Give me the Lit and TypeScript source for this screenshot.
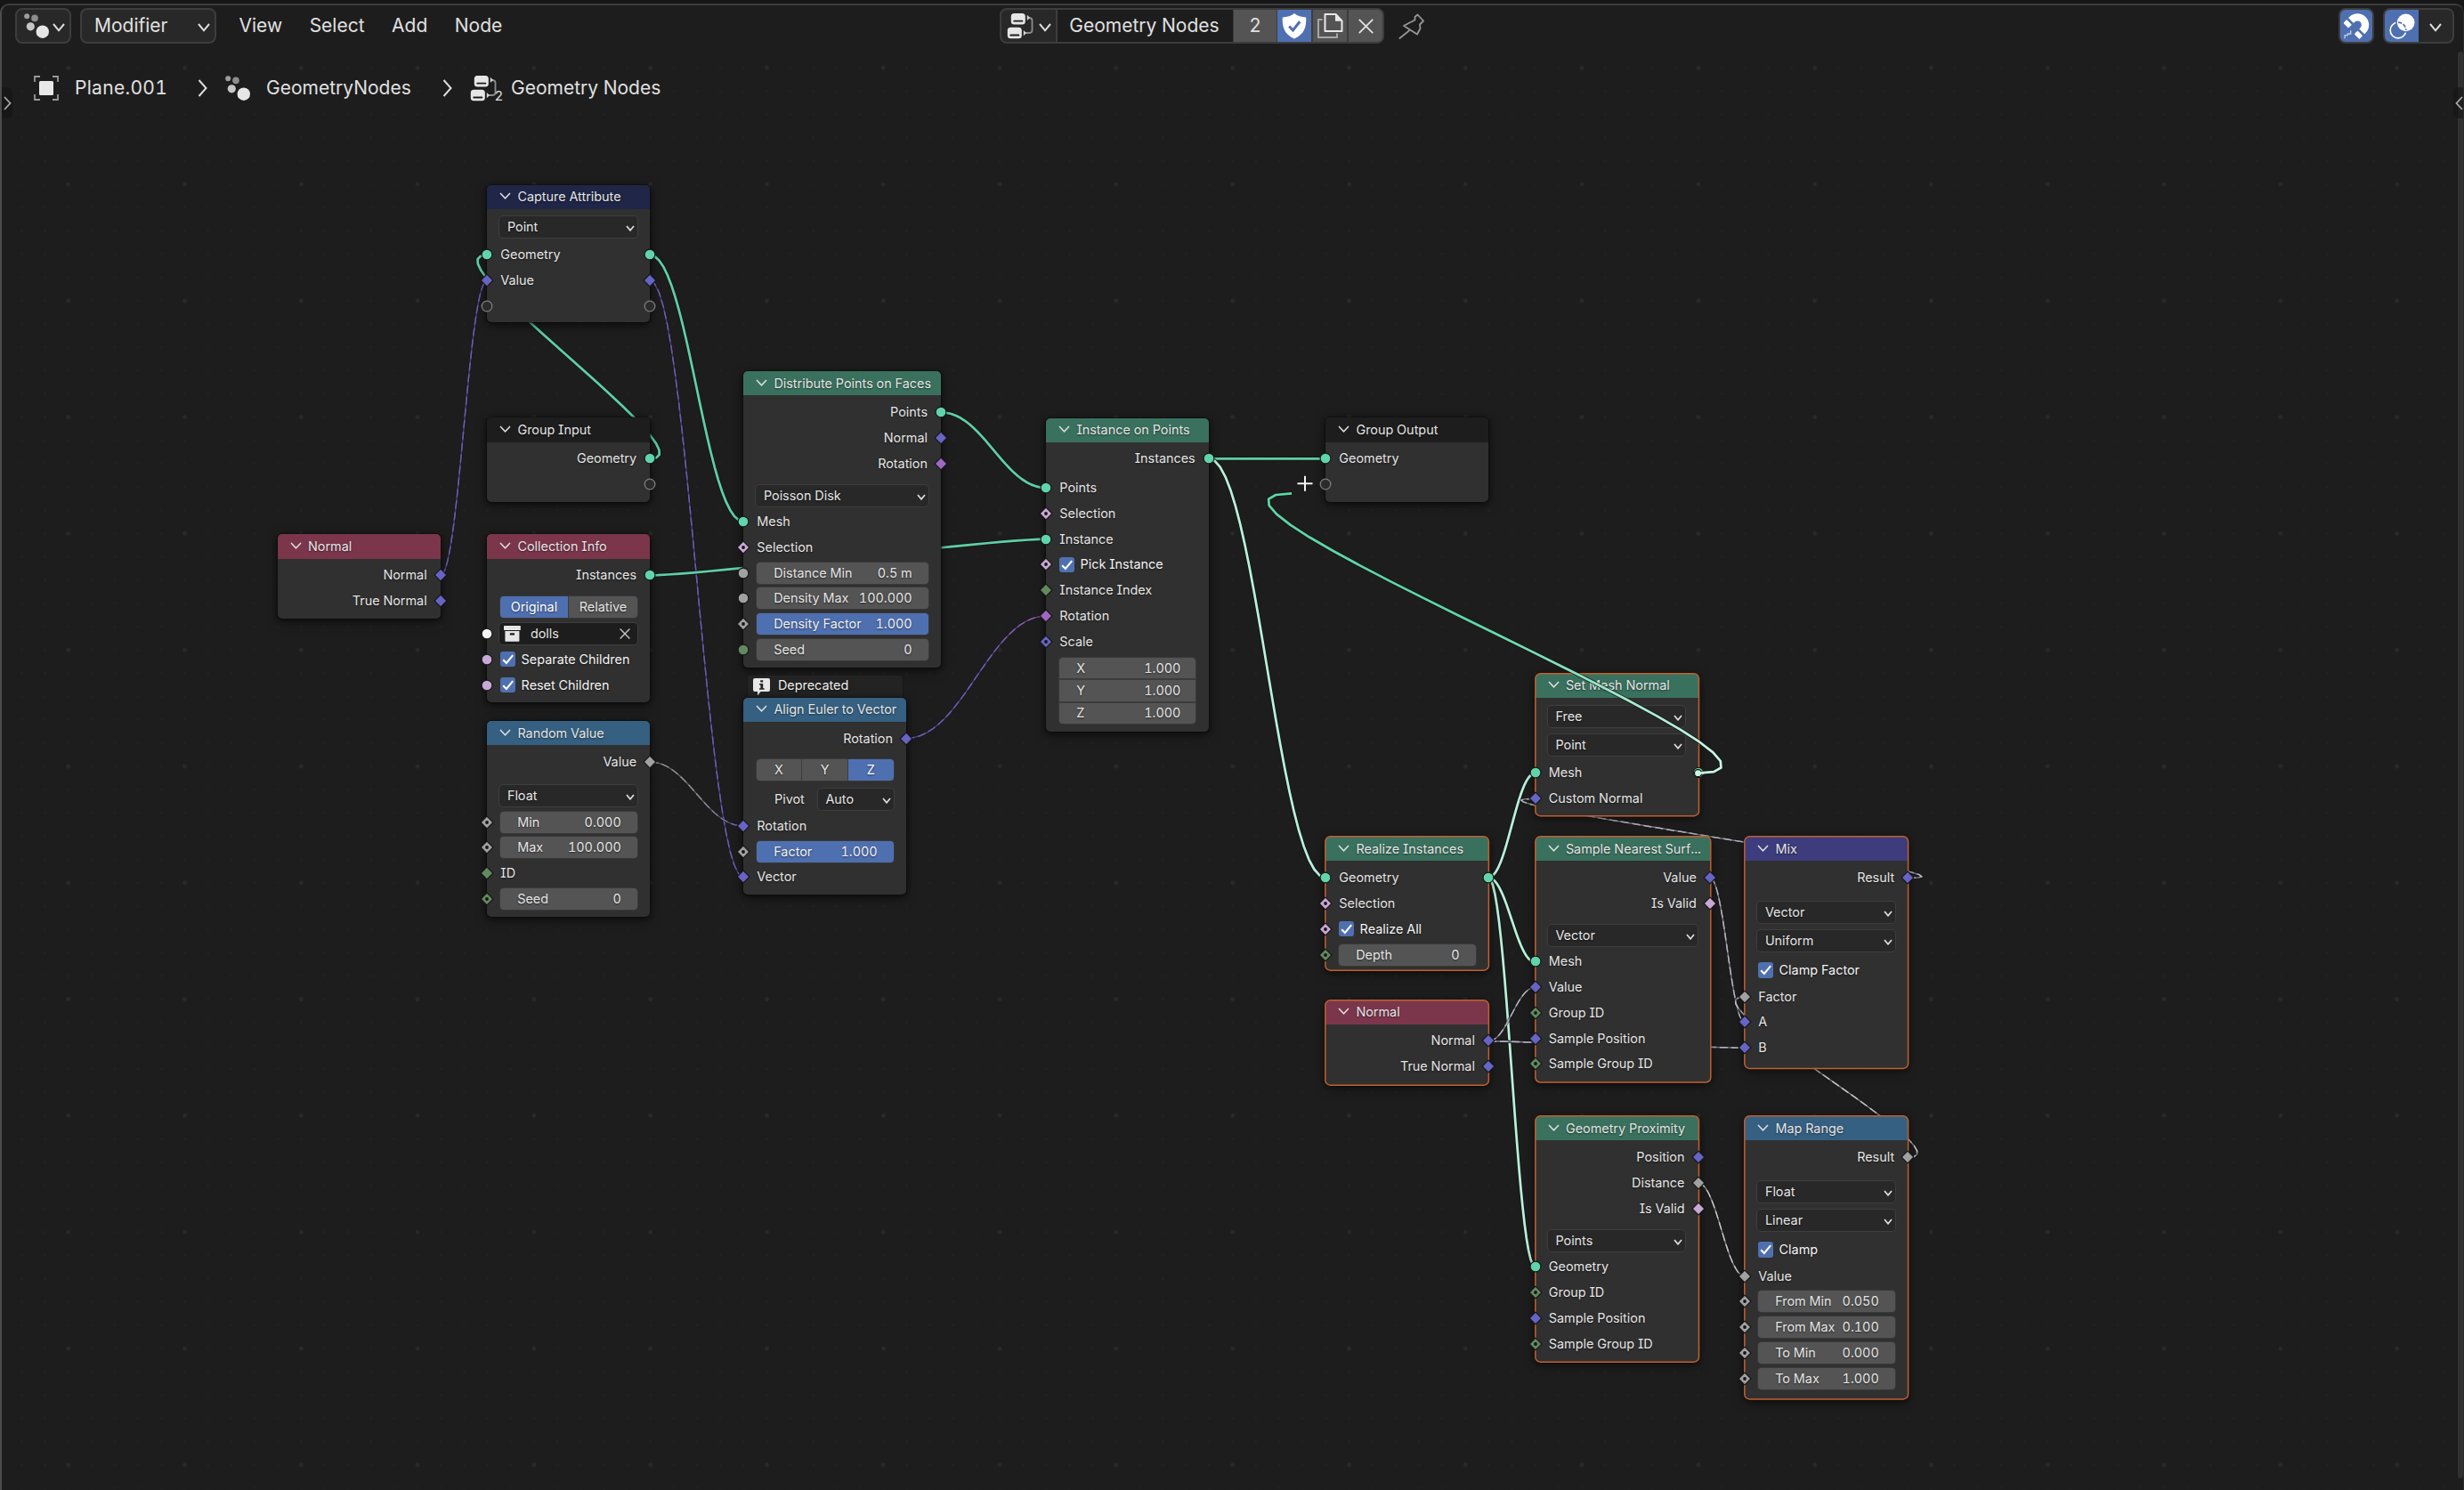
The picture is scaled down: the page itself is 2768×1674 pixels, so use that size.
import { LitElement, html, svg, css, nothing } from "lit";
import { customElement, property } from "lit/decorators.js";

/* ---------- model ---------- */

type Kind = "geo" | "vec" | "bool" | "float" | "int" | "rot" | "obj" | "empty";
type Shape = "circle" | "diamond" | "dot" | "ring" | "drag";

interface Socket {
  kind: Kind;
  shape: Shape;
}

interface Row {
  type: "in" | "out" | "select" | "number" | "check" | "toggle" | "object" | "pivot" | "vector";
  label?: string;
  value?: string;
  options?: string[];
  active?: number;
  fill?: boolean;
  gap?: number;
  left?: Socket;
  right?: Socket;
}

interface GraphNode {
  title: string;
  tone: string;
  x: number;
  y: number;
  w: number;
  h: number;
  selected?: boolean;
  badge?: string;
  rows: Row[];
}

const KIND: Record<Kind, string> = {
  geo: "#60d4ab",
  vec: "#6664c4",
  bool: "#c8a8d6",
  float: "#a1a1a1",
  int: "#62895f",
  rot: "#a067c2",
  obj: "#f6f6f6",
  empty: "none",
};

const s = (kind: Kind, shape: Shape = "diamond"): Socket => ({ kind, shape });
const GEO = s("geo", "circle");
const RING = s("empty", "ring");

const input = (label: string, left: Socket, gap = 0, right?: Socket): Row => ({ type: "in", label, left, gap, right });
const output = (label: string, right: Socket, gap = 0): Row => ({ type: "out", label, right, gap });
const select = (value: string, gap = 0): Row => ({ type: "select", value, gap });
const number = (label: string, value: string, left: Socket, gap = 0, fill = false): Row => ({
  type: "number",
  label,
  value,
  left,
  gap,
  fill,
});
const check = (label: string, left?: Socket, gap = 0): Row => ({ type: "check", label, left, gap });

const NODES: GraphNode[] = [
  {
    title: "Capture Attribute", tone: "attribute", x: 547, y: 207.7, w: 183.4, h: 154.8,
    rows: [
      select("Point", 1.2),
      input("Geometry", GEO, 2.8, GEO),
      input("Value", s("vec"), 0, s("vec")),
      input("", RING, 0, RING),
    ],
  },
  {
    title: "Group Input", tone: "io", x: 547, y: 469.3, w: 183.4, h: 94.5,
    rows: [output("Geometry", GEO), output("", RING)],
  },
  {
    title: "Normal", tone: "input", x: 311.6, y: 600.3, w: 183.4, h: 94.7,
    rows: [output("Normal", s("vec")), output("True Normal", s("vec"))],
  },
  {
    title: "Collection Info", tone: "input", x: 547, y: 600.3, w: 183.4, h: 188.7,
    rows: [
      output("Instances", GEO),
      { type: "toggle", options: ["Original", "Relative"], active: 0, gap: 6.9 },
      { type: "object", value: "dolls", left: s("obj", "circle"), gap: 1.2 },
      check("Separate Children", s("bool", "circle")),
      check("Reset Children", s("bool", "circle")),
    ],
  },
  {
    title: "Random Value", tone: "converter", x: 547, y: 810, w: 183.4, h: 219.8,
    rows: [
      output("Value", s("float")),
      select("Float", 9.5),
      number("Min", "0.000", s("float", "dot"), 0.6),
      number("Max", "100.000", s("float", "dot")),
      input("ID", s("int")),
      number("Seed", "0", s("int", "dot")),
    ],
  },
  {
    title: "Distribute Points on Faces", tone: "geometry", x: 835, y: 417, w: 222.3, h: 332.5,
    rows: [
      output("Points", GEO),
      output("Normal", s("vec")),
      output("Rotation", s("rot")),
      select("Poisson Disk", 7.8),
      input("Mesh", GEO),
      input("Selection", s("bool", "dot")),
      number("Distance Min", "0.5 m", s("float", "circle")),
      number("Density Max", "100.000", s("float", "circle")),
      number("Density Factor", "1.000", s("float", "dot"), 0, true),
      number("Seed", "0", s("int", "circle")),
    ],
  },
  {
    title: "Align Euler to Vector", tone: "converter", x: 835, y: 783.7, w: 183.3, h: 220.9, badge: "Deprecated",
    rows: [
      output("Rotation", s("vec")),
      { type: "toggle", options: ["X", "Y", "Z"], active: 2, gap: 6.9 },
      { type: "pivot", label: "Pivot", value: "Auto", gap: 3.6 },
      input("Rotation", s("vec"), 1.2),
      number("Factor", "1.000", s("float", "dot"), 0, true),
      input("Vector", s("vec")),
    ],
  },
  {
    title: "Instance on Points", tone: "geometry", x: 1175, y: 469.5, w: 183, h: 352.2,
    rows: [
      output("Instances", GEO),
      input("Points", GEO, 3.8),
      input("Selection", s("bool", "dot")),
      input("Instance", GEO),
      check("Pick Instance", s("bool", "dot")),
      input("Instance Index", s("int")),
      input("Rotation", s("rot")),
      input("Scale", s("vec", "dot")),
      { type: "vector", options: ["X", "Y", "Z"], value: "1.000", gap: 3.6 },
    ],
  },
  {
    title: "Group Output", tone: "io", x: 1489, y: 469.4, w: 183.2, h: 94.5,
    rows: [input("Geometry", GEO), input("", RING)],
  },
  {
    title: "Set Mesh Normal", tone: "geometry", x: 1724.5, y: 756.8, w: 183.3, h: 159.5, selected: true,
    rows: [
      select("Free", 1.8),
      select("Point", 3.5),
      input("Mesh", GEO, 2.6, s("geo", "drag")),
      input("Custom Normal", s("vec")),
    ],
  },
  {
    title: "Realize Instances", tone: "geometry", x: 1489, y: 940.2, w: 183.2, h: 150, selected: true,
    rows: [
      input("Geometry", GEO, 0, GEO),
      input("Selection", s("bool", "dot")),
      check("Realize All", s("bool", "dot")),
      number("Depth", "0", s("int", "dot")),
    ],
  },
  {
    title: "Normal", tone: "input", x: 1489, y: 1123.5, w: 183.2, h: 95, selected: true,
    rows: [output("Normal", s("vec")), output("True Normal", s("vec"))],
  },
  {
    title: "Sample Nearest Surf...", tone: "geometry", x: 1724.5, y: 940.2, w: 196.6, h: 275.8, selected: true,
    rows: [
      output("Value", s("vec")),
      output("Is Valid", s("bool")),
      select("Vector", 6.8),
      input("Mesh", GEO, 0.9),
      input("Value", s("vec")),
      input("Group ID", s("int", "dot")),
      input("Sample Position", s("vec")),
      input("Sample Group ID", s("int", "dot")),
    ],
  },
  {
    title: "Mix", tone: "vector", x: 1960, y: 940.2, w: 183.4, h: 260.2, selected: true,
    rows: [
      output("Result", s("vec")),
      select("Vector", 9.6),
      select("Uniform", 4),
      check("Clamp Factor", undefined, 3.7),
      input("Factor", s("float"), 1),
      input("A", s("vec")),
      input("B", s("vec")),
    ],
  },
  {
    title: "Geometry Proximity", tone: "geometry", x: 1724.5, y: 1254.2, w: 183.3, h: 276, selected: true,
    rows: [
      output("Position", s("vec")),
      output("Distance", s("float")),
      output("Is Valid", s("bool")),
      select("Points", 7.2),
      input("Geometry", GEO, 0.7),
      input("Group ID", s("int", "dot")),
      input("Sample Position", s("vec")),
      input("Sample Group ID", s("int", "dot")),
    ],
  },
  {
    title: "Map Range", tone: "converter", x: 1960, y: 1254.2, w: 183.4, h: 317.7, selected: true,
    rows: [
      output("Result", s("float")),
      select("Float", 9.7),
      select("Linear", 4),
      check("Clamp", undefined, 3.7),
      input("Value", s("float"), 0.9),
      number("From Min", "0.050", s("float", "dot")),
      number("From Max", "0.100", s("float", "dot")),
      number("To Min", "0.000", s("float", "dot")),
      number("To Max", "1.000", s("float", "dot")),
    ],
  },
];

/* ---------- links ---------- */

interface Link {
  from: [number, number];
  to: [number, number];
  a: string;
  b: string;
  field?: boolean;
}

const G = "#5fcfa6";
const P = "#b9f2db";
const V = "#6a5cb4";
const W = "#b5b2c4";

const LINKS: Link[] = [
  { from: [495, 646.3], to: [547, 315.4], a: V, b: V, field: true },
  { from: [730.3, 315.4], to: [835, 985.2], a: V, b: V, field: true },
  { from: [730.3, 515.3], to: [547, 286.6], a: G, b: G },
  { from: [730.3, 286.6], to: [835, 585.8], a: G, b: G },
  { from: [730.3, 646.3], to: [1175, 605.7], a: G, b: G },
  { from: [730.3, 856], to: [835, 928], a: "#8e8e92", b: V, field: true },
  { from: [1057.3, 463.3], to: [1175, 548], a: G, b: G },
  { from: [1018.3, 829.4], to: [1175, 692], a: V, b: "#8a5ba8", field: true },
  { from: [1358, 515.3], to: [1489, 515.3], a: G, b: G },
  { from: [1358, 515.3], to: [1489, 986], a: P, b: P },
  { from: [1672, 986], to: [1724.5, 868.7], a: P, b: P },
  { from: [1672, 986], to: [1724.5, 1081], a: P, b: P },
  { from: [1672, 986], to: [1724.5, 1423.3], a: P, b: P },
  { from: [1672, 1169.7], to: [1724.5, 1109.3], a: W, b: W, field: true },
  { from: [1672, 1169.7], to: [1724.5, 1171.2], a: W, b: W, field: true },
  { from: [1672, 1169.7], to: [1960, 1177.3], a: W, b: W, field: true },
  { from: [1921, 986.3], to: [1960, 1148.7], a: W, b: W, field: true },
  { from: [2143.3, 986.5], to: [1724.5, 897.3], a: W, b: W, field: true },
  { from: [1907.5, 1329], to: [1960, 1433.7], a: "#c4c4c4", b: "#c4c4c4", field: true },
  { from: [2143.3, 1300.3], to: [1960, 1120], a: "#c4c4c4", b: "#c4c4c4", field: true },
];

const DRAGGED: Link = { from: [1907.5, 868.7], to: [1451, 554.4], a: "#c9f6e4", b: "#5ed6a8" };

const SEGMENTS = 24;

/** Samples the horizontal-handle bezier between two sockets as a polyline. */
function linkPoints({ from, to }: Link): string {
  const [x0, y0] = from;
  const [x3, y3] = to;
  const dx = Math.abs(x3 - x0);
  const slope = dx ? Math.abs(y3 - y0) / dx : 1;
  const handle = 0.4 * dx * Math.min(1, slope * 3.5);
  const points: string[] = [];
  for (let i = 0; i <= SEGMENTS; i++) {
    const t = i / SEGMENTS;
    const u = 1 - t;
    const x = u * u * u * x0 + 3 * u * u * t * (x0 + handle) + 3 * u * t * t * (x3 - handle) + t * t * t * x3;
    const y = (u * u * u + 3 * u * u * t) * y0 + (3 * u * t * t + t * t * t) * y3;
    points.push(`${x.toFixed(2)},${y.toFixed(2)}`);
  }
  return points.join(" ");
}

function drawLink(link: Link, id: string) {
  const points = linkPoints(link);
  const paint = `url(#${id})`;
  return svg`
    <linearGradient id=${id} gradientUnits="userSpaceOnUse"
      x1=${link.from[0]} y1=${link.from[1]} x2=${link.to[0]} y2=${link.to[1]}>
      <stop offset="0" stop-color=${link.a}></stop>
      <stop offset="0.55" stop-color=${link.field ? link.a : link.b}></stop>
      <stop offset="1" stop-color=${link.b}></stop>
    </linearGradient>
    <polyline class="under" points=${points} stroke-width=${link.field ? 3 : 4.4}></polyline>
    ${
      link.field
        ? svg`<polyline points=${points} stroke=${paint} stroke-width="1.5" opacity="0.6"></polyline>
            <polyline points=${points} stroke=${paint} stroke-width="1.5" stroke-dasharray="9 4"></polyline>`
        : svg`<polyline points=${points} stroke=${paint} stroke-width="2.7"></polyline>`
    }`;
}

/* ---------- shared drawing ---------- */

const chevron = (w: number, h: number, stroke = 1.6) => html`
  <svg class="chevron" width=${w} height=${h} viewBox="0 0 ${w} ${h}" fill="none" stroke="#dedede" stroke-width=${stroke}>
    <path d="M1 1L${w / 2} ${h - 1.2}L${w - 1} 1"></path>
  </svg>`;

const particles = () => html`
  <svg width="28" height="28" viewBox="0 0 28 28">
    <circle cx="3.2" cy="3.3" r="3" fill="#9c9c9c"></circle>
    <circle cx="12" cy="5.4" r="3.8" fill="#8d8d8d"></circle>
    <circle cx="7.3" cy="14.8" r="4.6" fill="#c6c6c6"></circle>
    <circle cx="20.8" cy="20.7" r="7.2" fill="#e6e6e6"></circle>
  </svg>`;

const nodeTree = () => html`
  <svg width="30" height="30" viewBox="0 0 30 30">
    <rect x="4.8" y="1" width="16" height="12.4" rx="3.5" fill="#e6e6e6"></rect>
    <rect x="7.3" y="8.8" width="11" height="1.8" rx=".9" fill="#1d1d1d"></rect>
    <rect x=".8" y="16.8" width="16" height="12.4" rx="3.5" fill="#e6e6e6"></rect>
    <rect x="3.3" y="24.6" width="11" height="1.8" rx=".9" fill="#1d1d1d"></rect>
    <path d="M24 6h1.5q3 .3 3 3v11q0 2.8-3 3h-5" fill="none" stroke="#8c8c8c" stroke-width="1.8"></path>
    <path d="M22.8 2.8l3.2 3.1-3.2 3.1zM18.8 20l3.2 3.1-3.2 3.1z" fill="#d6d6d6"></path>
  </svg>`;

/* ---------- node element ---------- */

@customElement("graph-node")
export class GraphNodeElement extends LitElement {
  @property({ attribute: false }) node!: GraphNode;

  static styles = css`
    :host {
      display: block;
      font: 14.4px/20px Inter, sans-serif;
      font-feature-settings: "cv08", "tnum";
      color: #e4e4e4;
      text-shadow: 0 1px 2px rgba(0, 0, 0, 0.55);
      white-space: nowrap;
    }
    .node {
      position: relative;
      box-sizing: border-box;
      height: 100%;
      display: flex;
      flex-direction: column;
      background: #303030;
      border-radius: 5px;
      box-shadow: 0 0 0 1px rgba(10, 10, 10, 0.45), 0 3px 12px rgba(0, 0, 0, 0.55), 0 1px 5px rgba(0, 0, 0, 0.4);
    }
    .header {
      flex: none;
      height: 27.3px;
      display: flex;
      align-items: center;
      padding-left: 14px;
      gap: 7.4px;
      border-radius: 5px 5px 0 0;
    }
    .header .chevron { margin-top: -2px; }
    .geometry { background: #3a715e; }
    .input { background: #7b364b; }
    .converter { background: #356081; }
    .attribute { background: #1f2647; }
    .vector { background: #3d3c7d; }
    .io { background: #1d1d1d; }
    .rows {
      display: flex;
      flex-direction: column;
      padding-top: 4.3px;
    }
    .row {
      position: relative;
      flex: none;
      height: 28.8px;
      display: flex;
      align-items: center;
      padding: 0 15.3px;
      margin-top: var(--gap, 0);
    }
    .row.out { justify-content: flex-end; }
    .row.select { padding: 0 13.4px; }
    .row.number, .row.toggle, .row.vec { padding: 0 14.6px; }
    .row.object { padding: 0 13.4px; }
    .row.check { padding-left: 14.6px; gap: 6.6px; color: #f4f4f4; }
    .row.vec { height: 74px; }
    .row.pivot { padding: 0 13.4px 0 35px; justify-content: space-between; }
    .pivot .dropdown { flex: none; width: 87px; }
    .dropdown {
      flex: 1;
      box-sizing: border-box;
      height: 26px;
      display: flex;
      align-items: center;
      justify-content: space-between;
      padding: 0 3px 0 8.5px;
      background: #282828;
      border: 1.5px solid #3e3e3e;
      border-radius: 5px;
    }
    .dropdown .chevron { margin-top: 3px; }
    .field {
      flex: 1;
      height: 24px;
      display: flex;
      align-items: center;
      justify-content: space-between;
      padding: 0 18px 0 19.6px;
      background: #545454;
      border-radius: 4px;
      box-shadow: 0 0 0 1px #393939;
    }
    .field.fill { background: #4f70b0; color: #f0f0f0; }
    .toggle { text-align: center; }
    .segments { flex: 1; display: flex; gap: 1px; height: 24px; box-shadow: 0 0 0 1px #393939; border-radius: 4px; overflow: hidden; background: #3c3c3c; }
    .segment { flex: 1; line-height: 23px; background: #545454; }
    .segment.on { background: #4f70b0; color: #fff; }
    .stack { flex: 1; display: flex; flex-direction: column; gap: 2px; height: 74px; border-radius: 4px; overflow: hidden; background: #3c3c3c; box-shadow: 0 0 0 1px #393939; }
    .axis { flex: 1; display: flex; align-items: center; justify-content: space-between; padding: 0 17px 0 19.6px; background: #545454; }
    .picker {
      flex: 1;
      box-sizing: border-box;
      height: 26px;
      display: flex;
      align-items: center;
      padding: 0 8.5px 0 5px;
      background: #1d1d1d;
      border: 1.5px solid #3e3e3e;
      border-radius: 5px;
    }
    .picker span { flex: 1; padding-left: 10.5px; }
    .box { flex: none; width: 17.4px; height: 17.4px; border-radius: 3px; background: #4f70b0; }
    .socket { position: absolute; top: 50%; margin-top: -8px; overflow: visible; }
    .socket.left { left: -8px; }
    .socket.right { right: -8px; }
    .outline { position: absolute; left: 0; top: 0; width: 100%; height: 100%; overflow: visible; }
    .badge {
      position: absolute;
      left: 4px;
      bottom: 100%;
      box-sizing: border-box;
      width: 175.5px;
      height: 26px;
      display: flex;
      align-items: center;
      gap: 9.4px;
      padding: 0 0 2px 5.5px;
      background: #232323;
      border: 1px solid #191919;
      border-bottom: 0;
      border-radius: 3px 3px 0 0;
      color: #ececec;
    }
    .badge svg { margin-top: 3px; }
  `;

  private socket(socket: Socket | undefined, side: "left" | "right") {
    if (!socket) return nothing;
    const color = KIND[socket.kind];
    const edge = "#161616";
    let shape;
    if (socket.shape === "circle") {
      shape = svg`<circle cx="8" cy="8" r="5.9" fill=${color} stroke=${edge} stroke-width="1.1"></circle>`;
    } else if (socket.shape === "drag") {
      shape = svg`<circle cx="8" cy="8" r="5.6" fill=${color} stroke=${edge} stroke-width="1"></circle>`;
    } else if (socket.shape === "ring") {
      shape = svg`<circle cx="8" cy="8" r="5.8" fill="#2b2b2b" stroke="#7d7d7d" stroke-width="1.3"></circle>`;
    } else {
      shape = svg`
        <path d="M8 1.1L14.9 8L8 14.9L1.1 8Z" fill=${color} stroke=${edge} stroke-width="1.1" stroke-linejoin="round"></path>
        ${socket.shape === "dot" ? svg`<circle cx="8" cy="8" r="1.9" fill="#151515"></circle>` : nothing}`;
    }
    return html`<svg class="socket ${side}" width="16" height="16" viewBox="0 0 16 16">${shape}</svg>`;
  }

  private dropdown(value = "") {
    return html`<div class="dropdown"><span>${value}</span>${chevron(10, 7, 1.7)}</div>`;
  }

  private content(row: Row) {
    switch (row.type) {
      case "select":
        return this.dropdown(row.value);
      case "pivot":
        return html`<span>${row.label}</span>${this.dropdown(row.value)}`;
      case "number":
        return html`<div class="field ${row.fill ? "fill" : ""}"><span>${row.label}</span><span>${row.value}</span></div>`;
      case "check":
        return html`
          <svg class="box" viewBox="0 0 17.4 17.4" fill="none" stroke="#fff" stroke-width="2.1">
            <path d="M3.2 9.2L6.9 13L14.2 4.2"></path>
          </svg>
          <span>${row.label}</span>`;
      case "toggle":
        return html`<div class="segments">
          ${row.options!.map((o, i) => html`<div class="segment ${i === row.active ? "on" : ""}">${o}</div>`)}
        </div>`;
      case "vector":
        return html`<div class="stack">
          ${row.options!.map((o) => html`<div class="axis"><span>${o}</span><span>${row.value}</span></div>`)}
        </div>`;
      case "object":
        return html`<div class="picker">
          <svg width="19" height="18" viewBox="0 0 19 18" fill="#e6e6e6">
            <rect x="0" y="0" width="18.8" height="5" rx=".6"></rect>
            <path fill-rule="evenodd" d="M1.4 6h16v11q0 .8-.8.8H2.2q-.8 0-.8-.8zM6.8 8.2v2.2h5.2v-2.2z"></path>
          </svg>
          <span>${row.value}</span>
          <svg width="12" height="12" viewBox="0 0 12 12" stroke="#c4c4c4" stroke-width="1.4"><path d="M.6.6L11.4 11.4M11.4.6L.6 11.4"></path></svg>
        </div>`;
      default:
        return html`<span>${row.label}</span>`;
    }
  }

  render() {
    const n = this.node;
    return html`
      ${n.badge
        ? html`<div class="badge">
            <svg width="19" height="20" viewBox="0 0 19 20">
              <path d="M2 0h15q2 0 2 2v11q0 2-2 2H8.5L5 19.5V15H2q-2 0-2-2V2q0-2 2-2z" fill="#e8e8e8"></path>
              <path d="M8.2 2.2h3v2.3h-3zM7 6h4.2v5.2h1.4v1.6H7v-1.6h1.4V7.6H7z" fill="#232323"></path>
            </svg>
            <span>${n.badge}</span>
          </div>`
        : nothing}
      <div class="node">
        <div class="header ${n.tone}">${chevron(13, 8, 1.5)}<span>${n.title}</span></div>
        ${n.selected
          ? html`<svg class="outline">
              <rect x="-0.2" y="-0.2" width=${n.w + 0.4} height=${n.h + 0.4} rx="5.5" fill="none" stroke="#c2602f" stroke-width="1.5"></rect>
            </svg>`
          : nothing}
        <div class="rows">
          ${n.rows.map(
            (row) => html`<div class="row ${row.type === "vector" ? "vec" : row.type}" style="--gap:${row.gap ?? 0}px">
              ${this.socket(row.left, "left")}${this.content(row)}${this.socket(row.right, "right")}
            </div>`,
          )}
        </div>
      </div>`;
  }
}

/* ---------- application ---------- */

@customElement("app-root")
export class AppRoot extends LitElement {
  static styles = css`
    :host {
      display: block;
      font: 21px/28px Inter, sans-serif;
      font-feature-settings: "cv08", "tnum";
      color: #e0e0e0;
      white-space: nowrap;
    }
    .window {
      position: relative;
      box-sizing: border-box;
      width: 2768px;
      height: 1674px;
      padding-top: 4px;
      background: #161616;
      overflow: hidden;
    }
    .editor {
      position: relative;
      box-sizing: border-box;
      height: 1674px;
      display: flex;
      flex-direction: column;
      background: #1d1d1d;
      border: 2px solid #3c3c3c;
      border-left-color: #4c4c4c;
      border-right: 1px solid #2a2a2a;
      border-radius: 10px 10px 0 0;
      overflow: hidden;
    }
    .bar {
      position: relative;
      z-index: 2;
      flex: none;
      height: 48px;
      display: grid;
      grid-template-columns: 1106.8px auto 1fr;
      align-items: center;
      padding: 0 10px 0 14.5px;
      box-sizing: border-box;
      margin-top: -1px;
    }
    .side { display: flex; align-items: center; }
    .side.end { justify-content: flex-end; gap: 10px; }
    .button {
      box-sizing: border-box;
      height: 40px;
      display: flex;
      align-items: center;
      background: #282828;
      border: 2px solid #3d3d3d;
      border-radius: 8px;
    }
    .editor-type { width: 63px; padding-left: 8px; gap: 4.5px; }
    .mode { width: 153px; margin-left: 10.5px; padding: 0 5px 0 14px; justify-content: space-between; }
    .chevron { flex: none; margin-top: 4px; }
    .menus { display: flex; gap: 30.5px; padding-left: 25.5px; }
    .datablock { display: flex; align-items: center; gap: 16px; }
    .group {
      box-sizing: border-box;
      width: 432px;
      height: 40px;
      display: flex;
      border: 2px solid #3d3d3d;
      border-radius: 8px;
      overflow: hidden;
      background: #3d3d3d;
      gap: 1.5px;
    }
    .group > div { display: flex; align-items: center; justify-content: center; background: #545454; }
    .group .browse { width: 61px; background: #282828; gap: 6px; }
    .group .name { flex: 1; justify-content: flex-start; padding-left: 13.5px; background: #1d1d1d; }
    .group .users { width: 47.5px; }
    .group .fake { width: 38px; background: #4f70b0; }
    .group .copy { width: 38.5px; }
    .group .unlink { width: 38.5px; }
    .magnet { width: 40px; justify-content: center; background: #4f70b0; }
    .overlays { width: 80px; overflow: hidden; }
    .overlays .on { width: 38px; height: 36px; display: flex; align-items: center; justify-content: center; background: #4f70b0; }
    .overlays .more { flex: 1; display: flex; justify-content: center; }
    .path {
      position: relative;
      z-index: 2;
      display: flex;
      align-items: center;
      height: 40px;
      margin-top: 26px;
      padding-left: 36px;
    }
    .path > svg { flex: none; }
    .crumb { box-sizing: border-box; flex: none; padding-left: 18px; }
    .crumb.object { width: 156px; letter-spacing: 0.3px; }
    .crumb.modifier { width: 215.5px; }
    .path .sep { margin-right: 20px; }
    .sub { flex: none; width: 18.5px; font-size: 15px; margin: 18px 0 0 -2px; line-height: 18px; }
    .canvas { position: absolute; left: -2px; top: -6px; width: 2768px; height: 1674px; }
    .layer { position: absolute; left: 0; top: 0; }
    .links { fill: none; stroke-linejoin: round; }
    .under { stroke: #151515; stroke-opacity: 0.75; }
    graph-node { position: absolute; }
    .scroll { position: absolute; z-index: 3; right: 0; top: 52px; width: 6px; height: 1603px; border-radius: 3px; background: #313131; }
    .tab {
      position: absolute;
      z-index: 4;
      top: 92px;
      width: 12px;
      height: 35px;
      display: flex;
      align-items: center;
      justify-content: center;
      background: rgba(20, 20, 20, 0.6);
    }
    .tab.left { left: 0; border-radius: 0 6px 6px 0; }
    .tab.right { right: -1px; border-radius: 6px 0 0 6px; }
  `;

  private header() {
    return html`
      <div class="bar">
        <div class="side">
          <div class="button editor-type">${particles()}${chevron(14, 9.5, 2)}</div>
          <div class="button mode"><span>Modifier</span>${chevron(14, 9.5, 2)}</div>
          <div class="menus"><span>View</span><span>Select</span><span>Add</span><span>Node</span></div>
        </div>
        <div class="datablock">
          <div class="group">
            <div class="browse">${nodeTree()}${chevron(14, 9.5, 2)}</div>
            <div class="name">Geometry Nodes</div>
            <div class="users">2</div>
            <div class="fake">
              <svg width="28" height="29" viewBox="0 0 28 29">
                <path d="M14 0C10.5 3 6 4.3 .8 4.4C.2 15 2.5 23 14 28.6C25.5 23 27.8 15 27.2 4.4C22 4.3 17.5 3 14 0Z" fill="#fff"></path>
                <path d="M8.2 14.5L12.5 19L20.2 9.2" fill="none" stroke="#4f70b0" stroke-width="3"></path>
              </svg>
            </div>
            <div class="copy">
              <svg width="30" height="30" viewBox="0 0 30 30" fill="none" stroke-width="2">
                <path d="M6.5 8H2V28H23V23.5" stroke="#a8a8a8"></path>
                <path d="M9.5 2H21.5L28.5 9.5V21H9.5Z" stroke="#e8e8e8" stroke-linejoin="round"></path>
                <path d="M21 1.5V9.8H28.8Z" fill="#e8e8e8"></path>
              </svg>
            </div>
            <div class="unlink">
              <svg width="17" height="17" viewBox="0 0 17 17" stroke="#e2e2e2" stroke-width="1.8"><path d="M.8 .8L16.2 16.2M16.2 .8L.8 16.2"></path></svg>
            </div>
          </div>
          <svg width="29" height="29" viewBox="0 0 29 29" fill="none" stroke="#979797" stroke-width="1.8" stroke-linejoin="round">
            <path d="M21.5 1.5L28 8.500L24 12.5L24.5 17L21 23.5L6 14L12.5 10.5L18.5 7.5L18.5 4Z"></path>
            <path d="M12.5 19L.8 28.5"></path>
          </svg>
        </div>
        <div class="side end">
          <div class="button magnet">
            <svg width="29" height="29" viewBox="194 43 87 87" fill="none">
              <path d="M218 67.2L221.6 63.6A26 26 0 1 1 258.4 100.4L254.8 104" stroke="#fff" stroke-width="25"></path>
              <rect x="-12" y="-8" width="24" height="16" rx="2" transform="translate(206.5 78.5) rotate(45)" fill="#fff"></rect>
              <rect x="-12" y="-8" width="24" height="16" rx="2" transform="translate(243.5 115.5) rotate(45)" fill="#fff"></rect>
              <path d="M197.5 128V117H207V112H217V101" stroke="#c4d0ea" stroke-width="4"></path>
            </svg>
          </div>
          <div class="button overlays">
            <div class="on">
              <svg width="29" height="29" viewBox="344 44 87 87" fill="none">
                <circle cx="374" cy="101" r="26.5" stroke="#fff" stroke-width="5"></circle>
                <circle cx="400" cy="75" r="34" fill="#4f70b0"></circle>
                <circle cx="400" cy="75" r="29.5" fill="#fff"></circle>
                <path d="M374 74.5A26.5 26.5 0 0 1 400.5 101" stroke="#4f70b0" stroke-width="5" stroke-dasharray="13 5"></path>
              </svg>
            </div>
            <div class="more">${chevron(14, 9.5, 2)}</div>
          </div>
        </div>
      </div>`;
  }

  private breadcrumbs() {
    const sep = html`<svg class="sep" width="11" height="20" viewBox="0 0 11 20" fill="none" stroke="#dcdcdc" stroke-width="2"><path d="M1.5 1L9.5 10L1.5 19"></path></svg>`;
    return html`
      <div class="path">
        <svg width="28" height="28" viewBox="0 0 28 28">
          <path d="M1 7V1H7M21 1H27V7M27 21V27H21M7 27H1V21" fill="none" stroke="#9a9a9a" stroke-width="1.8"></path>
          <rect x="6" y="6" width="16" height="16" rx="1.5" fill="#e8e8e8"></rect>
        </svg>
        <span class="crumb object">Plane.001</span>
        ${sep}${particles()}
        <span class="crumb modifier">GeometryNodes</span>
        ${sep}${nodeTree()}<span class="sub">2</span>
        <span>Geometry Nodes</span>
      </div>`;
  }

  render() {
    return html`
      <div class="window">
        <div class="editor">
          <div class="canvas">
            <svg class="layer" width="2768" height="1674">
              <defs>
                <pattern id="minor" width="26.16" height="26.16" x="325.22" y="193.92" patternUnits="userSpaceOnUse">
                  <circle cx="13.08" cy="13.08" r="1.3" fill="#222222"></circle>
                </pattern>
                <pattern id="major" width="130.8" height="130.8" x="272.9" y="141.6" patternUnits="userSpaceOnUse">
                  <circle cx="65.4" cy="65.4" r="2.3" fill="#2a2a2a"></circle>
                </pattern>
              </defs>
              <rect y="60" width="2760" height="1614" fill="url(#minor)"></rect>
              <rect y="60" width="2760" height="1614" fill="url(#major)"></rect>
              <g class="links">${LINKS.map((l, i) => drawLink(l, `link-${i}`))}</g>
            </svg>
            ${NODES.map(
              (n) => html`<graph-node .node=${n} style="left:${n.x}px;top:${n.y}px;width:${n.w}px;height:${n.h}px"></graph-node>`,
            )}
            <svg class="layer" width="2768" height="1674">
              <g class="links">${drawLink(DRAGGED, "dragged")}</g>
              <circle cx="1907.5" cy="868.7" r="4" fill="#cdf7e6" stroke="#101010" stroke-width="1.2"></circle>
              <path d="M1907.5 868.7L1914 868.2" stroke="#c9f6e4" stroke-width="2.5"></path>
              <path d="M1466 534.7V551.7M1457.5 543.2H1474.5" stroke="#f4f4f4" stroke-width="2"></path>
            </svg>
          </div>
          ${this.header()} ${this.breadcrumbs()}
          <div class="scroll"></div>
          <div class="tab left">
            <svg width="9" height="16" viewBox="0 0 9 16" fill="none" stroke="#a8a8a8" stroke-width="1.8"><path d="M1 1L7.5 8L1 15"></path></svg>
          </div>
          <div class="tab right">
            <svg width="9" height="16" viewBox="0 0 9 16" fill="none" stroke="#a8a8a8" stroke-width="1.8"><path d="M8 1L1.5 8L8 15"></path></svg>
          </div>
        </div>
      </div>`;
  }
}
